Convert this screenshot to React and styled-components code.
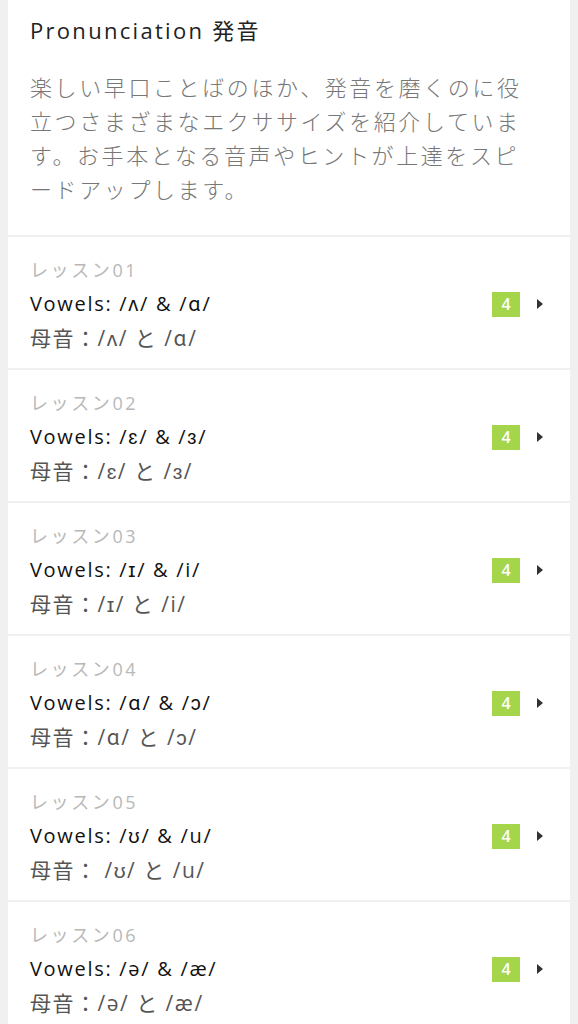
import React from "react";
import styled, { createGlobalStyle } from "styled-components";

const Global = createGlobalStyle`
  html, body { margin: 0; padding: 0; background: #f0f0f0; }
  body { font-family: "Open Sans", "Noto Sans CJK JP", sans-serif; }
  * { box-sizing: border-box; }
`;

const Page = styled.div`
  padding: 0 8px;
  min-height: 1024px;
`;

const Card = styled.div`
  display: flex;
  flex-direction: column;
  gap: 2px;
`;

const Section = styled.div`
  background: #fff;
`;

const Header = styled(Section)`
  padding: 14px 22px 30px;
`;

const Title = styled.h1`
  margin: 0;
  font-size: 22px;
  line-height: 32px;
  font-weight: 400;
  letter-spacing: 2.3px;
  color: #222;
`;

const Desc = styled.p`
  margin: 23px 0 0;
  max-width: 505px;
  font-size: 22px;
  line-height: 34px;
  letter-spacing: 2.6px;
  color: #777;
  font-weight: 300;
  font-family: "Noto Sans CJK JP", sans-serif;
`;

const Row = styled(Section)`
  display: flex;
  align-items: center;
  padding: 16px 27px 13px 22px;
`;

const Info = styled.div`
  flex: 1;
  display: flex;
  flex-direction: column;
`;

const Line = styled.div`
  font-size: ${(p) => p.$size}px;
  line-height: 34px;
  color: ${(p) => p.$color};
  letter-spacing: ${(p) => p.$ls || 0}px;
  font-weight: ${(p) => p.$weight || 400};
  white-space: nowrap;
`;

const Badge = styled.div`
  width: 28px;
  height: 25px;
  background: #a5d54b;
  color: #fff;
  font-size: 16px;
  font-weight: 600;
  display: flex;
  align-items: center;
  justify-content: center;
`;

const Arrow = styled.div`
  width: 0;
  height: 0;
  margin-left: 17px;
  border-top: 5px solid transparent;
  border-bottom: 5px solid transparent;
  border-left: 6px solid #333;
`;

const lessons = [
  ["01", "/ʌ/ & /ɑ/", "/ʌ/ と /ɑ/"],
  ["02", "/ɛ/ & /ɜ/", "/ɛ/ と /ɜ/"],
  ["03", "/ɪ/ & /i/", "/ɪ/ と /i/"],
  ["04", "/ɑ/ & /ɔ/", "/ɑ/ と /ɔ/"],
  ["05", "/ʊ/ & /u/", " /ʊ/ と /u/"],
  ["06", "/ə/ & /æ/", "/ə/ と /æ/"],
];

export default function App() {
  return (
    <>
      <Global />
      <Page>
        <Card>
          <Header>
            <Title>Pronunciation 発音</Title>
            <Desc>
              楽しい早口ことばのほか、発音を磨くのに役立つさまざまなエクササイズを紹介しています。お手本となる音声やヒントが上達をスピードアップします。
            </Desc>
          </Header>
          {lessons.map(([n, en, ja]) => (
            <Row key={n}>
              <Info>
                <Line $size={18} $color="#b8b8b8" $ls={2.6}>レッスン{n}</Line>
                <Line $size={20} $color="#111" $ls={1.7}>Vowels: {en}</Line>
                <Line $size={21} $color="#555" $ls={1.5}>母音：{ja}</Line>
              </Info>
              <Badge>4</Badge>
              <Arrow />
            </Row>
          ))}
        </Card>
      </Page>
    </>
  );
}
